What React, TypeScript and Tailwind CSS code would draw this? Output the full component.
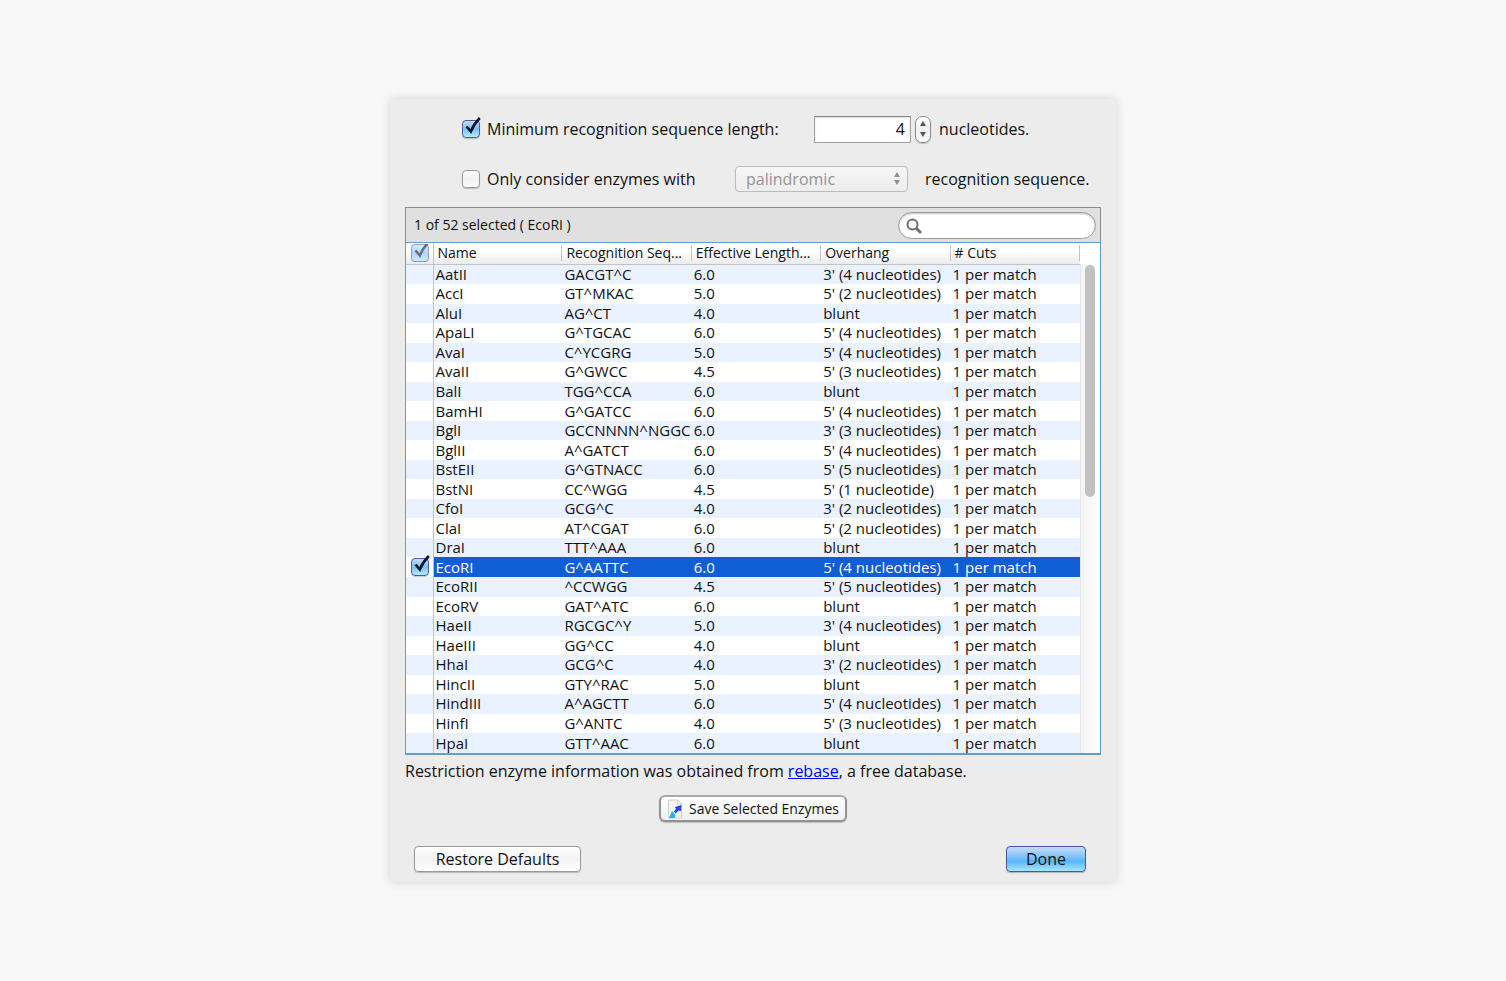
import React, { useState } from "react";

const enzymes = [
  ["AatII", "GACGT^C", "6.0", "3' (4 nucleotides)"],
  ["AccI", "GT^MKAC", "5.0", "5' (2 nucleotides)"],
  ["AluI", "AG^CT", "4.0", "blunt"],
  ["ApaLI", "G^TGCAC", "6.0", "5' (4 nucleotides)"],
  ["AvaI", "C^YCGRG", "5.0", "5' (4 nucleotides)"],
  ["AvaII", "G^GWCC", "4.5", "5' (3 nucleotides)"],
  ["BalI", "TGG^CCA", "6.0", "blunt"],
  ["BamHI", "G^GATCC", "6.0", "5' (4 nucleotides)"],
  ["BglI", "GCCNNNN^NGGC", "6.0", "3' (3 nucleotides)"],
  ["BglII", "A^GATCT", "6.0", "5' (4 nucleotides)"],
  ["BstEII", "G^GTNACC", "6.0", "5' (5 nucleotides)"],
  ["BstNI", "CC^WGG", "4.5", "5' (1 nucleotide)"],
  ["CfoI", "GCG^C", "4.0", "3' (2 nucleotides)"],
  ["ClaI", "AT^CGAT", "6.0", "5' (2 nucleotides)"],
  ["DraI", "TTT^AAA", "6.0", "blunt"],
  ["EcoRI", "G^AATTC", "6.0", "5' (4 nucleotides)"],
  ["EcoRII", "^CCWGG", "4.5", "5' (5 nucleotides)"],
  ["EcoRV", "GAT^ATC", "6.0", "blunt"],
  ["HaeII", "RGCGC^Y", "5.0", "3' (4 nucleotides)"],
  ["HaeIII", "GG^CC", "4.0", "blunt"],
  ["HhaI", "GCG^C", "4.0", "3' (2 nucleotides)"],
  ["HincII", "GTY^RAC", "5.0", "blunt"],
  ["HindIII", "A^AGCTT", "6.0", "5' (4 nucleotides)"],
  ["HinfI", "G^ANTC", "4.0", "5' (3 nucleotides)"],
  ["HpaI", "GTT^AAC", "6.0", "blunt"],
];

const headings = [
  "Name",
  "Recognition Seq...",
  "Effective Length...",
  "Overhang",
  "# Cuts",
];

const CheckBox = ({
  id,
  label,
  defaultChecked,
  faded,
}: {
  id: string;
  label?: string;
  defaultChecked?: boolean;
  faded?: boolean;
}) => {
  return (
    <span
      className={`relative block h-[18px] w-[18px] shrink-0 ${
        faded ? "overflow-hidden opacity-60" : ""
      }`}
    >
      <input
        id={id}
        type="checkbox"
        aria-label={label}
        defaultChecked={defaultChecked}
        className="peer block h-[18px] w-[18px] appearance-none rounded-[4px] border border-[#9a9a9a] bg-linear-to-b from-white via-[#f1f1f1] to-white shadow-[0_1px_1px_rgba(0,0,0,0.2)] checked:border-[#5058a8] checked:from-[#c5dcf8] checked:via-[#7dbdf5] checked:to-[#b4ecff]"
      />
      <svg
        viewBox="0 0 20 20"
        className="pointer-events-none absolute -top-[3px] left-0 hidden h-5 w-5 peer-checked:block"
        fill="none"
        stroke="#0b1626"
        strokeWidth="2.6"
      >
        <path d="M4.5 9.5 L8.8 14.5 Q11.5 7.5 17.8 1" />
      </svg>
    </span>
  );
};

const Arrow = ({ down }: { down?: boolean }) => (
  <svg viewBox="0 0 6 5" className="h-[5px] w-[6px]" fill="currentColor">
    {down ? <path d="M0 0h6L3 5z" /> : <path d="M0 5h6L3 0z" />}
  </svg>
);

const SaveIcon = () => (
  <svg viewBox="0 0 16 20" className="h-5 w-4">
    <path d="M1.5 1h9l4 4v14h-13z" fill="#f4f4f4" stroke="#d0d0d0" />
    <path d="M10.5 1v4h4z" fill="#fff" stroke="#c4c4c4" strokeWidth=".7" />
    <path d="M5 12l3.5 4-1 3H2z" fill="#19b3f5" />
    <path d="M8 8l6.5-2-.5 6-2.5-.5-3 3-1.5-2 2-2.5z" fill="#1f46f0" />
  </svg>
);

const EnzymeTable = () => {
  return (
    <div className="flex border border-t-0 border-b-2 border-[#5f9fd0] bg-white">
      <div className="min-w-0 flex-1">
        <table className="h-[510px] w-full table-fixed border-collapse text-[15px] leading-[19px]">
          <colgroup>
            <col className="w-[27px]" />
            <col />
            <col />
            <col />
            <col />
            <col />
          </colgroup>
          <thead>
            <tr className="h-[21px] bg-linear-to-b from-white from-40% to-[#ebebeb] text-sm">
              <th className="border-r border-b border-[#c4c4c4] p-0 pl-[5px]">
                <CheckBox
                  id="all"
                  label="Select all enzymes"
                  defaultChecked
                  faded
                />
              </th>
              {headings.map((heading) => (
                <th
                  key={heading}
                  className="border-b border-[#c4c4c4] p-0 text-left font-normal whitespace-nowrap"
                >
                  <div className="h-4 border-r border-[#c4c4c4] pl-1 leading-4">
                    {heading}
                  </div>
                </th>
              ))}
            </tr>
          </thead>
          <tbody>
            {enzymes.map(([name, sequence, length, overhang]) => (
              <tr key={name} className="whitespace-nowrap odd:bg-[#ebf2ff]">
                <td className="border-r border-[#c4c4c4] p-0 pl-[5px]">
                  {name === "EcoRI" && (
                    <div className="h-[19px]">
                      <CheckBox id={name} label={name} defaultChecked />
                    </div>
                  )}
                </td>
                {[name, sequence, length, overhang, "1 per match"].map(
                  (value, i) => (
                    <td
                      key={i}
                      className={`p-0 pl-[2px] ${
                        name === "EcoRI" ? "bg-[#105dd6] text-white" : ""
                      }`}
                    >
                      {value}
                    </td>
                  )
                )}
              </tr>
            ))}
          </tbody>
        </table>
      </div>
      <div className="w-5 shrink-0 pt-[21px]">
        <div className="h-full border-l border-[#e6e6e6] bg-linear-to-r from-[#f3f3f3] to-white pt-px pl-1">
          <div className="h-[232px] w-[10px] rounded-full bg-[#c1c1c1]" />
        </div>
      </div>
    </div>
  );
};

const App = () => {
  const [length, setLength] = useState(4);

  return (
    <div className="flex min-h-screen items-center justify-center bg-[#f8f8f8] font-['Open_Sans',sans-serif] text-base leading-5 text-[#111]">
      <main className="w-full max-w-[726px] bg-[#ececec] px-[15px] pt-4 pb-[10px] shadow-[0_0_10px_rgba(0,0,0,0.15)]">
        <div className="flex h-7 items-center pl-[57px]">
          <CheckBox id="minimum" defaultChecked />
          <label htmlFor="minimum" className="w-[334px] pl-[7px]">
            Minimum recognition sequence length:
          </label>
          <input
            type="text"
            aria-label="Minimum length"
            value={length}
            onChange={(e) => setLength(Number(e.target.value) || 0)}
            className="h-[27px] w-[97px] border border-[#a0a0a0] border-t-[#8a8a8a] bg-white px-[5px] text-right shadow-[inset_0_1px_2px_rgba(0,0,0,0.15)]"
          />
          <div className="mx-1 flex h-[27px] w-4 flex-col overflow-hidden rounded-[7px] border border-[#8e8e8e] bg-linear-to-b from-white via-[#f0f0f0] to-white py-px text-[#555] shadow-[0_1px_1px_rgba(0,0,0,0.2)]">
            <button
              aria-label="Increase"
              onClick={() => setLength(length + 1)}
              className="flex flex-1 items-center justify-center"
            >
              <Arrow />
            </button>
            <button
              aria-label="Decrease"
              onClick={() => setLength(length - 1)}
              className="flex flex-1 items-center justify-center"
            >
              <Arrow down />
            </button>
          </div>
          <span className="pl-1">nucleotides.</span>
        </div>

        <div className="mt-[22px] flex h-7 items-center pl-[57px]">
          <CheckBox id="consider" />
          <label htmlFor="consider" className="w-[255px] pl-[7px]">
            Only consider enzymes with
          </label>
          <div className="relative">
            <select
              disabled
              aria-label="Recognition sequence type"
              className="block h-[26px] w-[173px] appearance-none rounded-[4px] border border-[#bcbcbc] bg-linear-to-b from-[#f6f6f6] to-[#ededed] pl-[10px] text-[#949494] opacity-100"
            >
              <option>palindromic</option>
            </select>
            <span className="pointer-events-none absolute top-[6px] right-2 flex flex-col gap-[3px] text-[#8e8e8e]">
              <Arrow />
              <Arrow down />
            </span>
          </div>
          <span className="pl-[17px] whitespace-nowrap">
            recognition sequence.
          </span>
        </div>

        <div className="mt-[14px]">
          <div className="flex h-9 items-center justify-between border border-[#8c8c8c] border-b-[#5f9fd0] bg-[#e0e0e0] pr-1 pl-2 text-sm">
            <span>1 of 52 selected ( EcoRI )</span>
            <div className="relative">
              <svg
                viewBox="0 0 16 16"
                className="absolute top-[6px] left-2 h-4 w-4"
                fill="none"
                stroke="#6e6e6e"
              >
                <circle cx="6.5" cy="6.5" r="5" strokeWidth="2" />
                <path d="M10 10l5 5" strokeWidth="2.8" />
              </svg>
              <input
                type="search"
                aria-label="Search enzymes"
                className="block h-[27px] w-[198px] rounded-full border border-[#9b9b9b] bg-white pr-3 pl-7 shadow-[inset_0_1px_2px_rgba(0,0,0,0.25)]"
              />
            </div>
          </div>
          <EnzymeTable />
        </div>

        <p className="mt-[6px]">
          Restriction enzyme information was obtained from{" "}
          <a href="#rebase" className="text-[#0000ff] underline">
            rebase
          </a>
          , a free database.
        </p>

        <div className="mt-[14px] flex justify-center">
          <button className="flex h-[27px] w-[188px] items-center justify-center gap-[6px] rounded-[6px] border-2 border-[#929292] border-t-[#a8a8a8] bg-linear-to-b from-white to-[#f0f0f0] text-sm whitespace-nowrap shadow-[0_1px_1px_rgba(0,0,0,0.2)]">
            <SaveIcon />
            Save Selected Enzymes
          </button>
        </div>

        <div className="mt-6 flex justify-between pr-[15px] pl-[9px]">
          <button className="h-[26px] w-[167px] rounded-[4px] border border-[#999] bg-linear-to-b from-white via-[#f2f2f2] to-white shadow-[0_1px_1px_rgba(0,0,0,0.2)]">
            Restore Defaults
          </button>
          <button className="h-[26px] w-20 rounded-[4px] border border-[#5551a5] bg-linear-to-b from-[#b9d6f8] from-10% via-[#56b5fb] via-60% to-[#a6e6ff] shadow-[0_1px_1px_rgba(0,0,0,0.25)]">
            Done
          </button>
        </div>
      </main>
    </div>
  );
};

export default App;
